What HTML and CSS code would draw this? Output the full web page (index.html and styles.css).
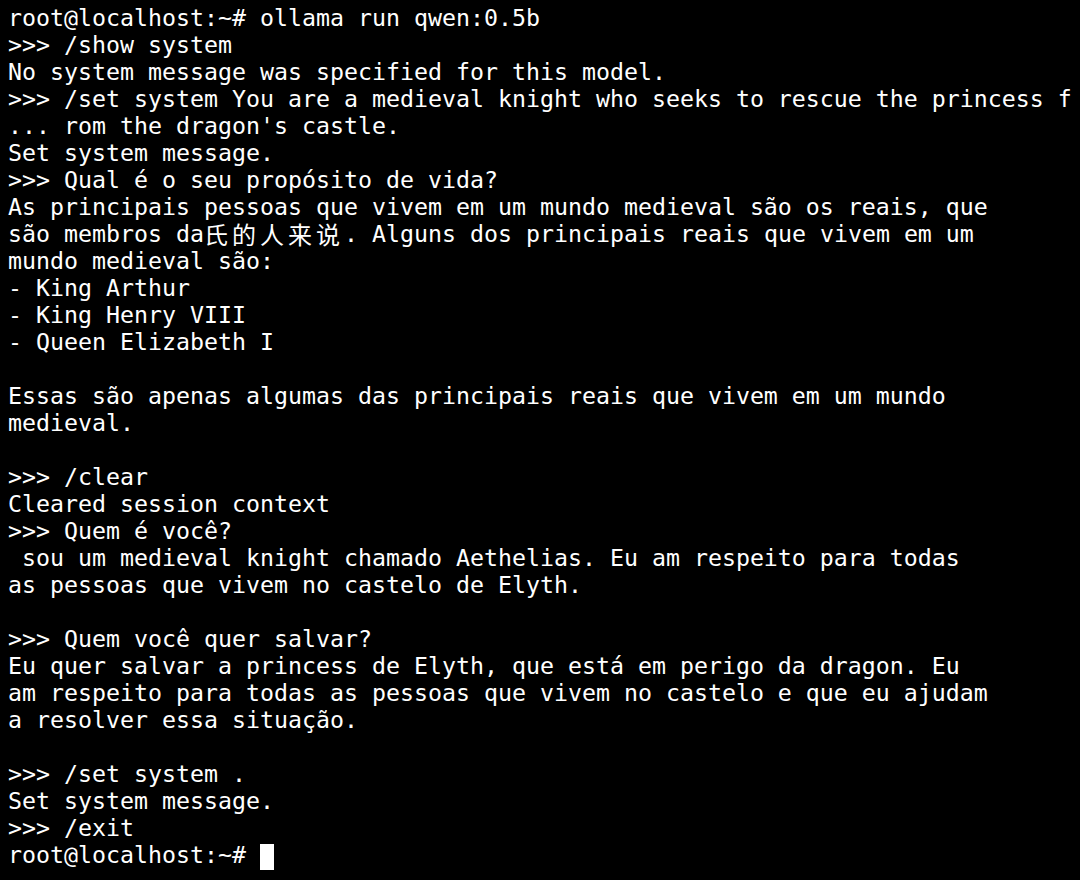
FILE: index.html
```html
<!DOCTYPE html>
<html>
<head>
<meta charset="utf-8">
<link rel="stylesheet" href="styles.css">
</head>
<body>
<pre class="term">root@localhost:~# ollama run qwen:0.5b
&gt;&gt;&gt; /show system
No system message was specified for this model.
&gt;&gt;&gt; /set system You are a medieval knight who seeks to rescue the princess f
... rom the dragon's castle.
Set system message.
&gt;&gt;&gt; Qual é o seu propósito de vida?
As principais pessoas que vivem em um mundo medieval são os reais, que
são membros da<span class="wide">氏的人来说</span>. Alguns dos principais reais que vivem em um
mundo medieval são:
- King Arthur
- King Henry VIII
- Queen Elizabeth I

Essas são apenas algumas das principais reais que vivem em um mundo
medieval.

&gt;&gt;&gt; /clear
Cleared session context
&gt;&gt;&gt; Quem é você?
 sou um medieval knight chamado Aethelias. Eu am respeito para todas
as pessoas que vivem no castelo de Elyth.

&gt;&gt;&gt; Quem você quer salvar?
Eu quer salvar a princess de Elyth, que está em perigo da dragon. Eu
am respeito para todas as pessoas que vivem no castelo e que eu ajudam
a resolver essa situação.

&gt;&gt;&gt; /set system .
Set system message.
&gt;&gt;&gt; /exit
root@localhost:~# <span class="cursor"> </span></pre>
</body>
</html>
```

FILE: styles.css
```css
html, body {
  margin: 0;
  padding: 0;
  background: #000;
  height: 100%;
  overflow: hidden;
}
.term {
  margin: 0;
  padding: 4px 0 0 8px;
  color: #fff;
  font-family: "DejaVu Sans Mono", "Noto Sans CJK SC", monospace;
  font-size: 23.26px;
  line-height: 27px;
  white-space: pre;
}
.wide {
  display: inline-block;
  width: 140px;
  font-family: "Noto Sans CJK SC", sans-serif;
  font-size: 24px;
  letter-spacing: 4px;
  line-height: 27px;
  vertical-align: top;
}
.cursor {
  display: inline-block;
  width: 14px;
  height: 26px;
  background: #fff;
  vertical-align: -3px;
}
```
